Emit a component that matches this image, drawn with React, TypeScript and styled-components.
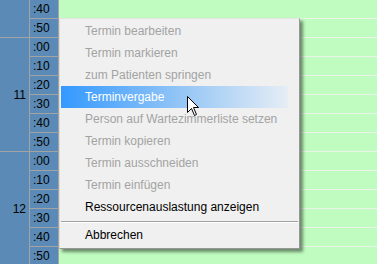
import styled, { createGlobalStyle } from "styled-components";

const GlobalStyle = createGlobalStyle`
  html, body {
    margin: 0;
    padding: 0;
    overflow: hidden;
  }
  body {
    font-family: "Liberation Sans", Arial, sans-serif;
    font-size: 12px;
  }
`;

const Screen = styled.div`
  position: relative;
  width: 377px;
  height: 264px;
  overflow: hidden;
  display: flex;
  background: #c0fcc0;
`;

const HourColumn = styled.div`
  width: 30px;
  flex: none;
  background: #5a8ab5;
  border-right: 1px solid #a3a3a3;
  box-sizing: border-box;
`;

const HourBlock = styled.div<{ $rows: number }>`
  height: ${(p) => p.$rows * 19}px;
  box-sizing: border-box;
  border-bottom: 1px solid #a3a3a3;
  display: flex;
  align-items: center;
  justify-content: flex-end;
  padding-right: 3px;
  color: #000;
`;

const MinuteColumn = styled.div`
  width: 29px;
  flex: none;
  background: #5a8ab5;
  border-right: 1px solid #a3a3a3;
  box-sizing: border-box;
`;

const MinuteCell = styled.div`
  height: 19px;
  box-sizing: border-box;
  border-bottom: 1px solid #a3a3a3;
  padding-left: 3px;
  line-height: 18px;
  color: #000;
`;

const SlotColumn = styled.div`
  flex: 1;
`;

const Slot = styled.div`
  height: 19px;
  box-sizing: border-box;
  border-bottom: 1px solid #eaf4ea;
`;

const Menu = styled.div`
  position: absolute;
  left: 59px;
  top: 18px;
  width: 241px;
  box-sizing: border-box;
  background: #f0f0f0;
  border: 1px solid #979797;
  border-top-color: #e4e4e4;
  border-left-color: #dcdcdc;
  padding: 1px 1px 2px 1px;
  box-shadow: 3px 3px 3px rgba(0, 0, 0, 0.45);
`;

const Item = styled.div<{ $disabled?: boolean; $active?: boolean }>`
  height: 22px;
  line-height: 22px;
  margin-right: 10px;
  padding-left: 24px;
  white-space: nowrap;
  color: ${(p) => (p.$active ? "#fff" : p.$disabled ? "#a3a3a3" : "#000")};
  background: ${(p) =>
    p.$active ? "linear-gradient(to right, #3399ff 0%, #8fc3f6 50%, #e6edf5 100%)" : "transparent"};
`;

const Separator = styled.div`
  height: 1px;
  margin: 3px 0 1px;
  background: #a0a0a0;
  border-bottom: 1px solid #ffffff;
`;

const Cursor = styled.svg`
  position: absolute;
  left: 187px;
  top: 96px;
`;

const minutes = [":40", ":50", ":00", ":10", ":20", ":30", ":40", ":50", ":00", ":10", ":20", ":30", ":40", ":50"];

const items = [
  { label: "Termin bearbeiten", disabled: true },
  { label: "Termin markieren", disabled: true },
  { label: "zum Patienten springen", disabled: true },
  { label: "Terminvergabe", active: true },
  { label: "Person auf Wartezimmerliste setzen", disabled: true },
  { label: "Termin kopieren", disabled: true },
  { label: "Termin ausschneiden", disabled: true },
  { label: "Termin einfügen", disabled: true },
  { label: "Ressourcenauslastung anzeigen" },
];

export default function App() {
  return (
    <Screen>
      <GlobalStyle />
      <HourColumn>
        <HourBlock $rows={2} />
        <HourBlock $rows={6}>11</HourBlock>
        <HourBlock $rows={6}>12</HourBlock>
      </HourColumn>
      <MinuteColumn>
        {minutes.map((m, i) => (
          <MinuteCell key={i}>{m}</MinuteCell>
        ))}
      </MinuteColumn>
      <SlotColumn>
        {minutes.map((_, i) => (
          <Slot key={i} />
        ))}
      </SlotColumn>

      <Menu>
        {items.map((it) => (
          <Item key={it.label} $disabled={it.disabled} $active={it.active}>
            {it.label}
          </Item>
        ))}
        <Separator />
        <Item>Abbrechen</Item>
      </Menu>

      <Cursor width="13" height="21" viewBox="0 0 13 21">
        <path
          d="M0.5 0.5 L0.5 16.5 L4.5 12.5 L7.5 19.5 L9.5 18.5 L6.5 11.5 L11.5 11.5 Z"
          fill="#fff"
          stroke="#000"
          strokeWidth="1"
          strokeLinejoin="miter"
        />
      </Cursor>
    </Screen>
  );
}
